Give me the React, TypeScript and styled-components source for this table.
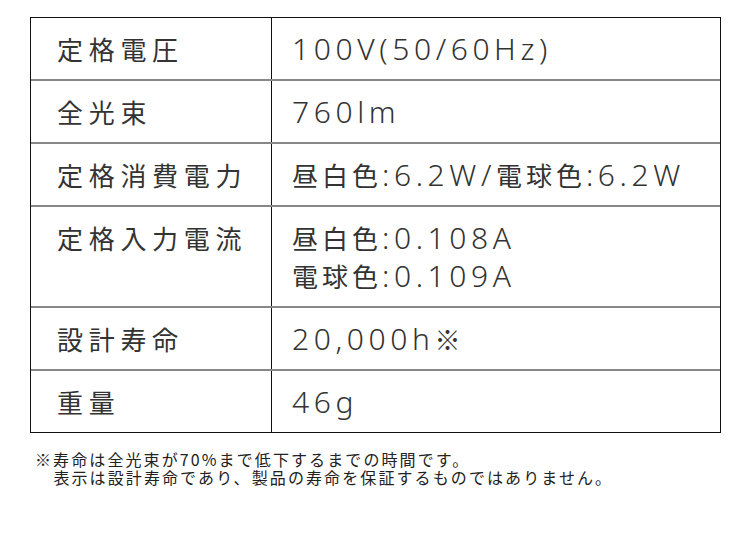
import React from "react";
import styled, { createGlobalStyle } from "styled-components";

const Global = createGlobalStyle`
  html, body { margin: 0; padding: 0; background: #ffffff; }
  body { font-family: "Noto Sans CJK JP", sans-serif; color: #333333; }
`;

const Page = styled.div`
  padding: 17px 0 0 30px;
  width: 691px;
`;

const Table = styled.div`
  border: 1px solid #111111;
  display: flex;
  flex-direction: column;
`;

const Row = styled.div<{ $first?: boolean }>`
  display: grid;
  grid-template-columns: 241px 1fr;
  border-top: ${(p) => (p.$first ? "none" : "2px solid #878787")};
`;

const Label = styled.div`
  border-right: 1px solid #111111;
  padding: 11.5px 0 11.5px 26px;
  font-family: "Noto Sans CJK JP", sans-serif;
  font-size: 26px;
  line-height: 38px;
  letter-spacing: 5.7px;
  color: #333333;
  white-space: nowrap;
`;

const Value = styled.div`
  padding: 11.5px 0 11.5px 20px;
  font-family: "Noto Sans CJK JP", sans-serif;
  font-size: 26px;
  line-height: 38px;
  letter-spacing: 4px;
  color: #333333;
  white-space: nowrap;
`;

const ValueLine = styled.div`
  height: 38px;
`;

const Num = styled.span`
  font-family: "Noto Sans", sans-serif;
  font-size: 30px;
  font-weight: 300;
  letter-spacing: 4.6px;
`;

const Note = styled.div`
  margin: 17px 0 0 5px;
  font-family: "Noto Sans CJK JP", sans-serif;
  font-size: 16px;
  line-height: 18px;
  letter-spacing: 2.1px;
  color: #222222;
`;

const NoteLine = styled.div<{ $indent?: boolean }>`
  padding-left: ${(p) => (p.$indent ? "18.4px" : "0")};
  white-space: nowrap;
`;

export default function App() {
  return (
    <>
      <Global />
      <Page>
        <Table>
          <Row $first>
            <Label>定格電圧</Label>
            <Value>
              <Num>100V(50/60Hz)</Num>
            </Value>
          </Row>
          <Row>
            <Label>全光束</Label>
            <Value>
              <Num>760lm</Num>
            </Value>
          </Row>
          <Row>
            <Label>定格消費電力</Label>
            <Value>
              昼白色<Num>:6.2W/</Num>電球色<Num>:6.2W</Num>
            </Value>
          </Row>
          <Row>
            <Label>定格入力電流</Label>
            <Value>
              <ValueLine>
                昼白色<Num>:0.108A</Num>
              </ValueLine>
              <ValueLine>
                電球色<Num>:0.109A</Num>
              </ValueLine>
            </Value>
          </Row>
          <Row>
            <Label>設計寿命</Label>
            <Value>
              <Num>20,000h</Num>※
            </Value>
          </Row>
          <Row>
            <Label>重量</Label>
            <Value>
              <Num>46g</Num>
            </Value>
          </Row>
        </Table>
        <Note>
          <NoteLine>※寿命は全光束が70%まで低下するまでの時間です。</NoteLine>
          <NoteLine $indent>表示は設計寿命であり、製品の寿命を保証するものではありません。</NoteLine>
        </Note>
      </Page>
    </>
  );
}
